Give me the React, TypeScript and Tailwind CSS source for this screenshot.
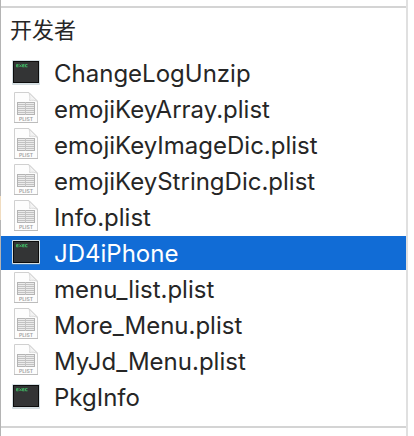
import React from "react";

type Kind = "exec" | "plist";

const files: { name: string; kind: Kind }[] = [
  { name: "ChangeLogUnzip", kind: "exec" },
  { name: "emojiKeyArray.plist", kind: "plist" },
  { name: "emojiKeyImageDic.plist", kind: "plist" },
  { name: "emojiKeyStringDic.plist", kind: "plist" },
  { name: "Info.plist", kind: "plist" },
  { name: "JD4iPhone", kind: "exec" },
  { name: "menu_list.plist", kind: "plist" },
  { name: "More_Menu.plist", kind: "plist" },
  { name: "MyJd_Menu.plist", kind: "plist" },
  { name: "PkgInfo", kind: "exec" },
];

function ExecIcon() {
  return (
    <svg width="32" height="34" viewBox="0 0 32 34" aria-hidden="true" className="shrink-0">
      <rect x="2" y="5" width="28" height="24" rx="1" fill="#7f99a0" opacity="0.35" />
      <rect x="2" y="4" width="28" height="24" rx="1" fill="#d5dfe3" />
      <rect x="3" y="5" width="26" height="22" fill="#0c0c0c" />
      <rect x="4" y="6" width="24" height="20" fill="#333435" />
      <g fill="none" stroke="#3fae60" strokeWidth="1">
        <path d="M8.500 8.600H6.500V10.800H8.500M6.500 9.700H8.500" />
        <path d="M9.500 8.500L11.500 11M11.500 8.500L9.500 11" />
        <path d="M14.500 8.600H12.500V10.800H14.500M12.500 9.700H14.500" />
        <path d="M17.500 8.600H15.500V10.800H17.500" />
      </g>
    </svg>
  );
}

function PlistIcon() {
  return (
    <svg width="32" height="34" viewBox="0 0 32 34" aria-hidden="true" className="shrink-0">
      <path d="M4.500 .5H19L27.500 9V30.500H4.500Z" fill="#fdfdfd" stroke="#d0d0d0" />
      <path d="M4 30.500H28" stroke="#bcbcbc" />
      <path d="M19 1C20 4 20 6 19.500 8.500C22 8 25 8 27.500 9.500Z" fill="#f4f4f4" stroke="#d2d2d2" strokeWidth="0.8" />
      <rect x="7.500" y="10.500" width="17" height="12" fill="#ececec" stroke="#b4b4b4" />
      <path d="M8 12.500H24M8 14.500H24M8 16.500H24M8 18.500H24M8 20.500H24" stroke="#bdbdbd" strokeWidth="0.9" />
      <path d="M15.500 10V23" stroke="#c4c4c4" />
      <text x="16" y="28.500" textAnchor="middle" fontFamily="Inter, sans-serif" fontSize="5" fontWeight="600" fill="#a0a0a0">
        PLIST
      </text>
    </svg>
  );
}

export default function App() {
  return (
    <div className="relative flex min-h-screen bg-white font-['Inter','Noto_Sans_CJK_SC',sans-serif] text-[#262626]">
      <main className="mr-1.5 grow border-r-2 border-l border-r-[#e0e0e0] border-l-[#b4b4b4] pt-1.5">
        <section className="border-y-2 border-[#d4d4d4] pb-[11px]">
          <h1 className="mt-1.5 px-[9px] text-[22px] leading-8">开发者</h1>
          <ul className="mt-[9px]">
            {files.map((file) => {
              const selected = file.name === "JD4iPhone";
              return (
                <li
                  key={file.name}
                  className={
                    selected
                      ? "my-px flex h-[34px] items-center gap-3 bg-[#116cd6] px-[9px] text-white"
                      : "flex h-9 items-center gap-3 px-[9px]"
                  }
                >
                  {file.kind === "exec" ? <ExecIcon /> : <PlistIcon />}
                  <span className="pt-0.5 text-2xl">{file.name}</span>
                </li>
              );
            })}
          </ul>
        </section>
      </main>
      <div className="absolute top-[196px] left-0 h-6 w-px bg-[#f0dcc0]" />
    </div>
  );
}
